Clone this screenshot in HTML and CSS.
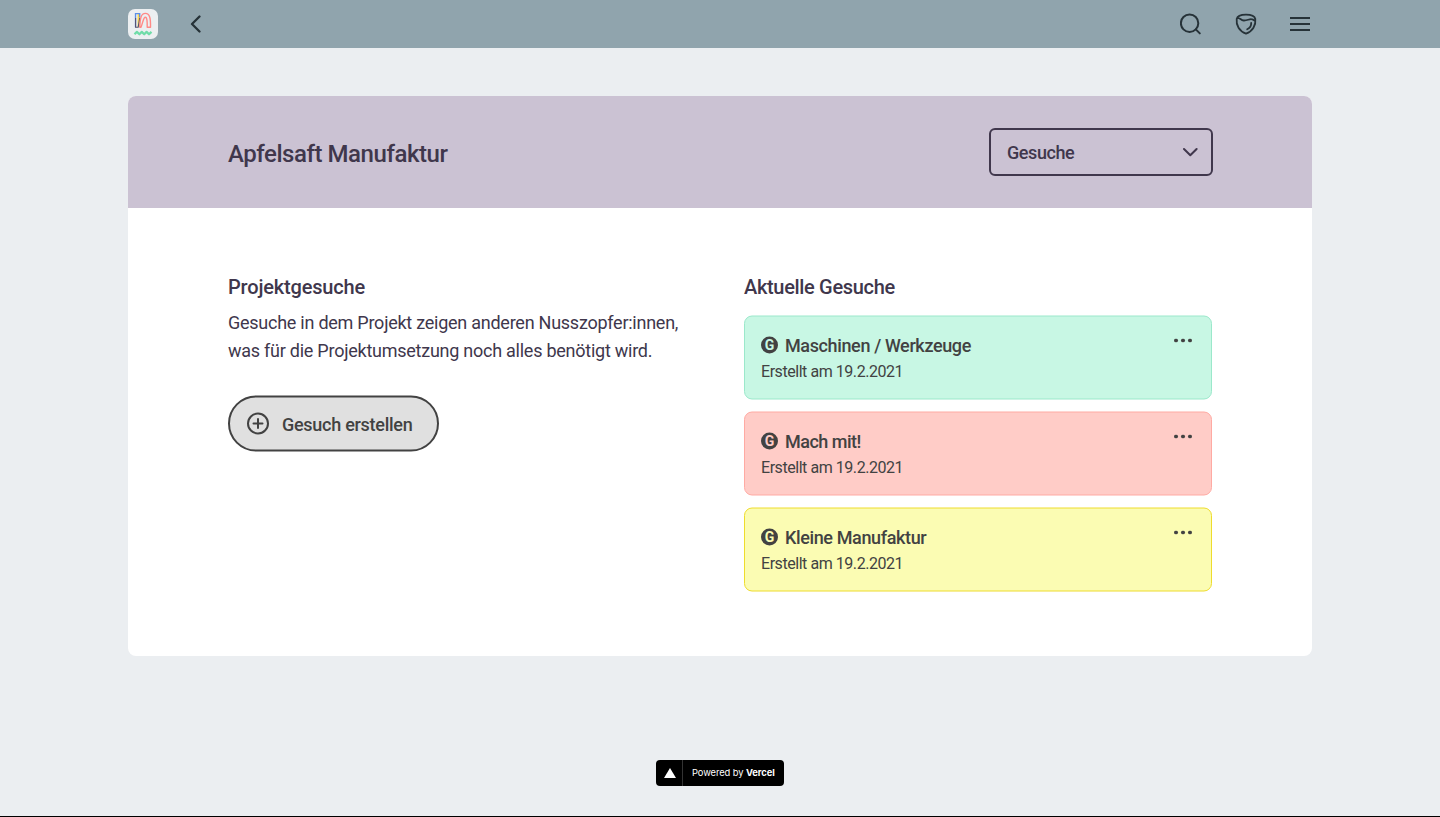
FILE: index.html
```html
<!DOCTYPE html>
<html lang="de">
<head>
<meta charset="utf-8">
<title>Apfelsaft Manufaktur</title>
<link rel="stylesheet" href="styles.css">
</head>
<body>
<header class="topbar">
  <div class="topbar-side">
    <svg class="logo" width="30" height="30" viewBox="0 0 30 30" fill="none">
      <rect width="30" height="30" rx="7" fill="#eceff1"/>
      <path d="M10.600 5v13" stroke="#fbd84b" stroke-width="2"/>
      <path d="M7.500 18.300V4.600h4.200V8" stroke="#5b8fe8" stroke-width="1.300"/>
      <path d="M7.600 9v9.200h2.600l1.600-9.500" stroke="#55526f" stroke-width="1.100"/>
      <path d="M11.800 18.300c.2-8.500 1-13.900 5.600-13.900 4.400 0 5.300 5 5.100 13.900h-3.300c.1-6-.1-10-1.900-10s-2.200 4.500-4.300 10z" stroke="#ff8a87" stroke-width="1.400" stroke-linejoin="round"/>
      <path d="M6.500 25.300l2.400-2.400 2.500 2.400 2.400-2.400 2.400 2.400 2.400-2.400 2.400 2.400 2.500-2.400" stroke="#6fdca8" stroke-width="2.200" stroke-linejoin="round"/>
    </svg>
    <svg class="back" width="12" height="18" viewBox="0 0 12 18"><path class="line heavy" d="M9.500 1.500L2 9l7.500 7.500"/></svg>
  </div>
  <nav class="topbar-side topbar-nav">
    <svg width="22" height="22" viewBox="0 0 22 22"><circle class="line" cx="9.600" cy="10.200" r="8.700"/><path class="line" d="M15.800 16.400l4 4"/></svg>
    <svg width="22" height="22" viewBox="0 0 22 22"><path class="line thin" d="M11 1.700C5.500 1.700 2.300 3.200 1.700 6 .9 12 4.300 18.300 11 20.700 17.700 18.300 21.100 12 20.300 6 19.700 3.200 16.500 1.700 11 1.700zM2.500 4.800c2.700.1 3.200 2.500 6.200 2.700 3.400.2 5.300-1.500 7.600-1.300 1.600.1 2.400.7 3.600 1.700M16.200 10c.1 2.400-1.500 5-4 6.300"/></svg>
    <svg width="20" height="16" viewBox="0 0 20 16"><path class="line butt" d="M0 2h20M0 8h20M0 14h20"/></svg>
  </nav>
</header>

<main class="panel">
  <div class="panel-head">
    <h1>Apfelsaft Manufaktur</h1>
    <div class="select">
      <span>Gesuche</span>
      <svg width="16" height="10" viewBox="0 0 16 10"><path d="M2 2l6.300 6.300L14.600 2"/></svg>
    </div>
  </div>
  <div class="columns">
    <section>
      <h2 class="h-projekt">Projektgesuche</h2>
      <p class="intro">Gesuche in dem Projekt zeigen anderen Nusszopfer:innen,<br>was für die Projektumsetzung noch alles benötigt wird.</p>
      <button class="create">
        <svg width="24" height="24" viewBox="0 0 24 24"><circle cx="12" cy="12" r="10"/><path d="M12 7.500v9M7.500 12h9"/></svg>
        <span>Gesuch erstellen</span>
      </button>
    </section>
    <section>
      <h2 class="h-aktuell">Aktuelle Gesuche</h2>
      <div class="list">
        <article class="item green">
          <div><h3><i class="badge">G</i><span>Maschinen / Werkzeuge</span></h3><p>Erstellt am 19.2.2021</p></div>
          <svg class="dots" width="18" height="4" viewBox="0 0 18 4"><circle cx="2" cy="2" r="2"/><circle cx="9" cy="2" r="2"/><circle cx="16" cy="2" r="2"/></svg>
        </article>
        <article class="item red">
          <div><h3><i class="badge">G</i><span class="tight">Mach mit!</span></h3><p>Erstellt am 19.2.2021</p></div>
          <svg class="dots" width="18" height="4" viewBox="0 0 18 4"><circle cx="2" cy="2" r="2"/><circle cx="9" cy="2" r="2"/><circle cx="16" cy="2" r="2"/></svg>
        </article>
        <article class="item yellow">
          <div><h3><i class="badge">G</i><span>Kleine Manufaktur</span></h3><p>Erstellt am 19.2.2021</p></div>
          <svg class="dots" width="18" height="4" viewBox="0 0 18 4"><circle cx="2" cy="2" r="2"/><circle cx="9" cy="2" r="2"/><circle cx="16" cy="2" r="2"/></svg>
        </article>
      </div>
    </section>
  </div>
</main>

<footer class="footer">
  <div class="vercel">
    <div class="mark"><svg width="12" height="10" viewBox="0 0 12 10"><path d="M6 0l6 10H0z" fill="#fff"/></svg></div>
    <span>Powered by <b>Vercel</b></span>
  </div>
</footer>
</body>
</html>
```
FILE: styles.css
```css
* { box-sizing: border-box; }
body {
  margin: 0;
  height: 817px;
  overflow: hidden;
  display: flex;
  flex-direction: column;
  background: #ebeef1;
  border-bottom: 1px solid #000;
  color: #40374c;
  font-family: "Roboto", sans-serif;
}
h1, h2, h3, p { margin: 0; font-weight: 500; white-space: nowrap; }
svg { display: block; flex: none; }
.topbar {
  height: 48px;
  flex: none;
  padding: 0 130px 0 128px;
  display: flex;
  justify-content: space-between;
  align-items: center;
  background: #90a4ad;
}
.topbar-side { display: flex; align-items: center; gap: 32px; }
.topbar-nav { gap: 33px; }
.line { fill: none; stroke: #263238; stroke-width: 2; stroke-linecap: round; stroke-linejoin: round; }
.thin { stroke-width: 1.8; }
.heavy { stroke-width: 2.3; }
.butt { stroke-linecap: butt; }
.panel {
  width: 1184px;
  height: 560px;
  flex: none;
  margin: 48px auto 0;
  border-radius: 8px;
  overflow: hidden;
  background: #fff;
}
.panel-head {
  height: 112px;
  padding: 0 99px 0 100px;
  display: flex;
  align-items: center;
  justify-content: space-between;
  background: #cbc2d3;
}
h1 { font-size: 24px; line-height: 32px; padding-top: 3px; letter-spacing: -.45px; }
.select {
  width: 224px;
  height: 48px;
  padding: 0 13px 0 16px;
  display: flex;
  align-items: center;
  justify-content: space-between;
  border: 2px solid #40374c;
  border-radius: 6px;
  font-size: 18px;
  font-weight: 500;
  letter-spacing: -.42px;
}
.select svg { fill: none; stroke: #40374c; stroke-width: 2; stroke-linecap: round; stroke-linejoin: round; }
.columns {
  padding: 64px 100px 0;
  display: grid;
  grid-template-columns: 468px 468px;
  gap: 48px;
}
h2 { font-size: 20px; line-height: 30px; }
.h-projekt { letter-spacing: -.18px; }
.h-aktuell { letter-spacing: -.33px; }
.intro { margin-top: 7px; font-size: 18px; line-height: 28px; font-weight: 400; letter-spacing: -.25px; }
.create {
  width: 211px;
  height: 56px;
  margin-top: 31px;
  padding: 0 0 0 16px;
  display: flex;
  align-items: center;
  gap: 12px;
  border: 2px solid #424242;
  border-radius: 28px;
  background: #e0e0e0;
  color: #424242;
  font: 500 18px "Roboto", sans-serif;
  letter-spacing: -.27px;
  white-space: nowrap;
  transform: translateY(-.5px);
}
.create svg { fill: none; stroke: #424242; stroke-width: 2; stroke-linecap: round; }
.create span { padding-top: 1px; }
.list { display: grid; gap: 12px; margin-top: 14px; transform: translateY(-.5px); }
.item {
  height: 84px;
  padding: 15px 19px 0 16px;
  display: flex;
  justify-content: space-between;
  border: 1px solid;
  border-radius: 8px;
  color: #424242;
}
.green { background: #c8f7e4; border-color: #9be8cb; }
.red { background: #ffccc7; border-color: #ffaaa3; }
.yellow { background: #fbfcb3; border-color: #eedc2d; }
h3 { display: flex; align-items: center; gap: 7px; font-size: 18px; line-height: 28px; letter-spacing: -.37px; }
.tight { letter-spacing: -.5px; }
.badge {
  width: 17px;
  height: 17px;
  margin-bottom: 1px;
  display: grid;
  place-items: center;
  border-radius: 50%;
  background: #424242;
  font: 700 14px/17px "Roboto", sans-serif;
  letter-spacing: 0;
}
.green .badge { color: #c8f7e4; }
.red .badge { color: #ffccc7; }
.yellow .badge { color: #fbfcb3; }
.item p { font-size: 16px; line-height: 24px; font-weight: 400; letter-spacing: -.45px; }
.dots { margin-top: 7px; fill: #424242; }
.footer { margin-top: 104px; display: flex; justify-content: center; }
.vercel {
  width: 128px;
  height: 26px;
  display: flex;
  align-items: center;
  border-radius: 4px;
  background: #000;
  color: #fff;
  font: 400 9.4px "Inter", sans-serif;
  letter-spacing: -.1px;
  white-space: nowrap;
}
.vercel span { padding-bottom: 1px; }
.vercel .mark {
  width: 27px;
  height: 26px;
  margin-right: 9px;
  padding-left: 2px;
  display: grid;
  place-items: center;
  border-right: 1px solid #333;
}
```
